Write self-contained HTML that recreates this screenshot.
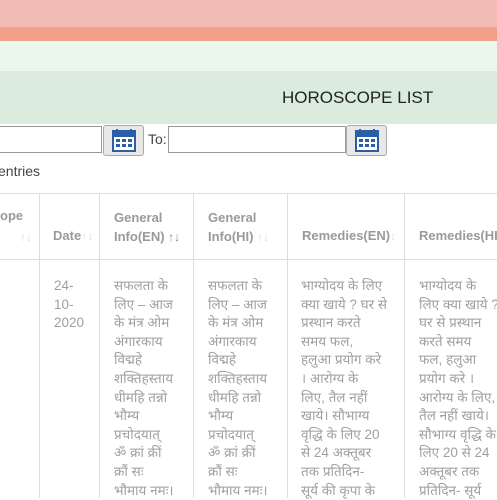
<!DOCTYPE html>
<html><head><meta charset="utf-8"><style>
*{margin:0;padding:0;box-sizing:border-box}
body{width:497px;height:498px;overflow:hidden;background:#fff;font-family:"Liberation Sans",sans-serif;position:relative}
.b{position:absolute;left:0;width:497px}
.ab{position:absolute}
.cal{position:absolute;width:41px;height:31px;border:1px solid #aaa;border-radius:3px;background:#e8e8e8}
.inp{position:absolute;height:27px;border:1px solid #999;background:#fff}
.td{position:absolute;top:277px;color:#a0a0a0;font-size:13.5px;line-height:18.6px;font-family:"Liberation Sans","Noto Sans CJK SC",sans-serif}
.vl{position:absolute;top:193px;width:1px;height:305px;background:#ddd}
.ar{color:#ddd;font-weight:normal;font-size:12px}
</style></head><body>
<div class="b" style="top:0;height:27px;background:#f2bcb4"></div>
<div class="b" style="top:27px;height:14px;background:#f2a08a"></div>
<div class="b" style="top:41px;height:30px;background:#ebf7ed"></div>
<div class="b" style="top:71px;height:53px;background:#dbebde"></div>
<div class="ab" style="left:282px;top:88px;font-size:17px;color:#222">HOROSCOPE LIST</div>
<div class="inp" style="left:-2px;top:126px;width:104px"></div>
<div class="cal" style="left:103px;top:125px"><svg width="41" height="31"><rect x="9" y="5" width="22" height="20" fill="#fff" stroke="#2a5fa8" stroke-width="2"/><rect x="9" y="5" width="22" height="6" fill="#2a5fa8"/><g fill="#2a5fa8"><rect x="12" y="3" width="2" height="5"/><rect x="26" y="3" width="2" height="5"/><rect x="12" y="13" width="4" height="3"/><rect x="18" y="13" width="4" height="3"/><rect x="24" y="13" width="4" height="3"/><rect x="12" y="18" width="4" height="3"/><rect x="18" y="18" width="4" height="3"/><rect x="24" y="18" width="4" height="3"/></g></svg></div>
<div class="ab" style="left:148px;top:131px;font-size:14px;color:#444">To:</div>
<div class="inp" style="left:168px;top:126px;width:178px"></div>
<div class="cal" style="left:346px;top:125px"><svg width="41" height="31"><rect x="9" y="5" width="22" height="20" fill="#fff" stroke="#2a5fa8" stroke-width="2"/><rect x="9" y="5" width="22" height="6" fill="#2a5fa8"/><g fill="#2a5fa8"><rect x="12" y="3" width="2" height="5"/><rect x="26" y="3" width="2" height="5"/><rect x="12" y="13" width="4" height="3"/><rect x="18" y="13" width="4" height="3"/><rect x="24" y="13" width="4" height="3"/><rect x="12" y="18" width="4" height="3"/><rect x="18" y="18" width="4" height="3"/><rect x="24" y="18" width="4" height="3"/></g></svg></div>
<div class="ab" style="left:-2px;top:163px;font-size:14px;color:#444">entries</div>
<div class="b" style="top:193px;height:1px;background:#ddd"></div>
<div class="b" style="top:259px;height:1px;background:#ddd"></div>
<div class="vl" style="left:39px"></div><div class="vl" style="left:99px"></div><div class="vl" style="left:193px"></div><div class="vl" style="left:287px"></div><div class="vl" style="left:404px"></div>
<div class="ab" style="left:0;top:208px;font-size:13px;font-weight:bold;color:#9a9a9a">ope</div>
<div class="ab ar" style="left:20px;top:230px">↑↓</div>
<div class="ab" style="left:53px;top:228px;font-size:13px;font-weight:bold;color:#9a9a9a">Date<span class="ar">↑↓</span></div>
<div class="ab" style="left:114px;top:208px;font-size:13px;font-weight:bold;color:#9a9a9a;line-height:19px">General<br>Info(EN) <span class="ar" style="color:#888">↑↓</span></div>
<div class="ab" style="left:208px;top:208px;font-size:13px;font-weight:bold;color:#9a9a9a;line-height:19px">General<br>Info(HI) <span class="ar">↑↓</span></div>
<div class="ab" style="left:302px;top:228px;font-size:13px;font-weight:bold;color:#9a9a9a">Remedies(EN)<span class="ar">↓</span></div>
<div class="ab" style="left:419px;top:228px;font-size:13px;font-weight:bold;color:#9a9a9a;white-space:nowrap">Remedies(HI)</div>
<div class="td" style="left:54px;width:40px">24-<br>10-<br>2020</div>
<div class="td" style="left:114px;width:80px">सफलता के<br>लिए – आज<br>के मंत्र ओम<br>अंगारकाय<br>विद्महे<br>शक्तिहस्ताय<br>धीमहि तन्नो<br>भौम्य<br>प्रचोदयात्<br>ॐ क्रां क्रीं<br>क्रौं सः<br>भौमाय नमः।</div>
<div class="td" style="left:208px;width:80px">सफलता के<br>लिए – आज<br>के मंत्र ओम<br>अंगारकाय<br>विद्महे<br>शक्तिहस्ताय<br>धीमहि तन्नो<br>भौम्य<br>प्रचोदयात्<br>ॐ क्रां क्रीं<br>क्रौं सः<br>भौमाय नमः।</div>
<div class="td" style="left:301px;width:100px">भाग्योदय के लिए<br>क्या खाये ? घर से<br>प्रस्थान करते<br>समय फल,<br>हलुआ प्रयोग करे<br>। आरोग्य के<br>लिए, तैल नहीं<br>खाये। सौभाग्य<br>वृद्धि के लिए 20<br>से 24 अक्तूबर<br>तक प्रतिदिन-<br>सूर्य की कृपा के</div>
<div class="td" style="left:419px;width:90px;white-space:nowrap">भाग्योदय के<br>लिए क्या खाये ?<br>घर से प्रस्थान<br>करते समय<br>फल, हलुआ<br>प्रयोग करे ।<br>आरोग्य के लिए,<br>तैल नहीं खाये।<br>सौभाग्य वृद्धि के<br>लिए 20 से 24<br>अक्तूबर तक<br>प्रतिदिन- सूर्य</div>
</body></html>
